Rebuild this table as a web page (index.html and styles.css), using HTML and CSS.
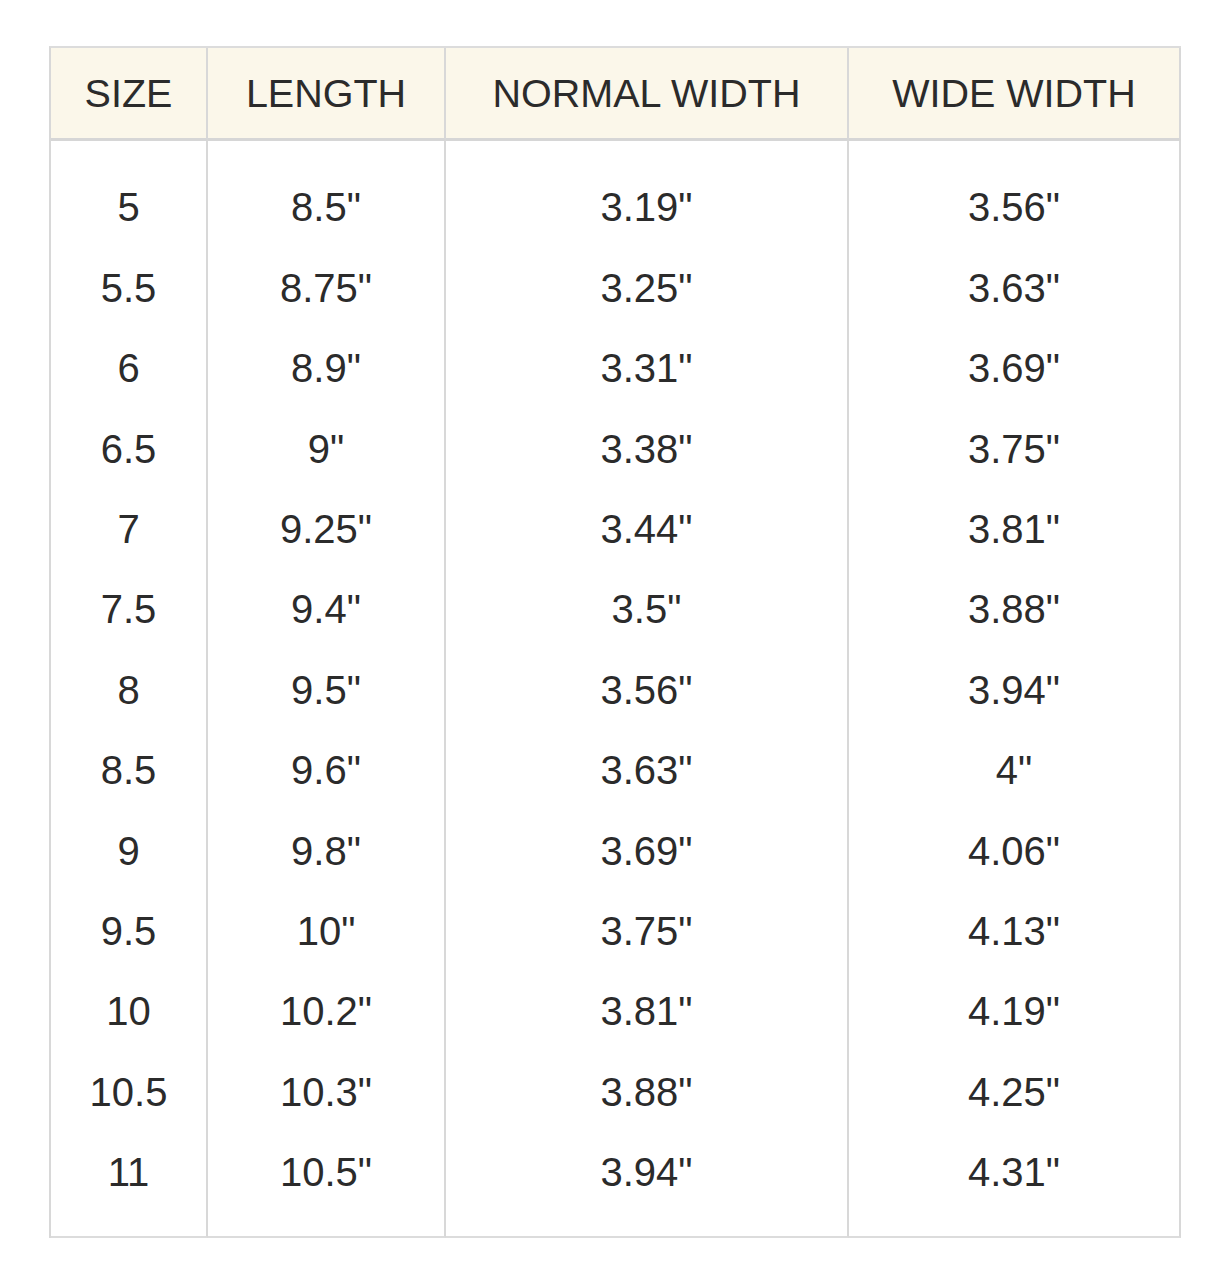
FILE: index.html
```html
<!DOCTYPE html>
<html lang="en">
<head>
<meta charset="utf-8">
<title>Size Chart</title>
<link rel="stylesheet" href="styles.css">
</head>
<body>
<table class="size-chart">
  <colgroup>
    <col class="c-size">
    <col class="c-length">
    <col class="c-normal">
    <col class="c-wide">
  </colgroup>
  <thead>
    <tr><th>SIZE</th><th>LENGTH</th><th>NORMAL WIDTH</th><th>WIDE WIDTH</th></tr>
  </thead>
  <tbody>
    <tr class="first"><td>5</td><td>8.5"</td><td>3.19"</td><td>3.56"</td></tr>
    <tr><td>5.5</td><td>8.75"</td><td>3.25"</td><td>3.63"</td></tr>
    <tr><td>6</td><td>8.9"</td><td>3.31"</td><td>3.69"</td></tr>
    <tr><td>6.5</td><td>9"</td><td>3.38"</td><td>3.75"</td></tr>
    <tr><td>7</td><td>9.25"</td><td>3.44"</td><td>3.81"</td></tr>
    <tr><td>7.5</td><td>9.4"</td><td>3.5"</td><td>3.88"</td></tr>
    <tr><td>8</td><td>9.5"</td><td>3.56"</td><td>3.94"</td></tr>
    <tr><td>8.5</td><td>9.6"</td><td>3.63"</td><td>4"</td></tr>
    <tr><td>9</td><td>9.8"</td><td>3.69"</td><td>4.06"</td></tr>
    <tr><td>9.5</td><td>10"</td><td>3.75"</td><td>4.13"</td></tr>
    <tr><td>10</td><td>10.2"</td><td>3.81"</td><td>4.19"</td></tr>
    <tr><td>10.5</td><td>10.3"</td><td>3.88"</td><td>4.25"</td></tr>
    <tr class="last"><td>11</td><td>10.5"</td><td>3.94"</td><td>4.31"</td></tr>
  </tbody>
</table>
</body>
</html>
```
FILE: styles.css
```css
html, body {
  margin: 0;
  padding: 0;
  background: #ffffff;
}

body {
  padding: 46px 0 0 49px;
  font-family: "Liberation Sans", Arial, Helvetica, sans-serif;
  color: #2b2b2b;
}

.size-chart {
  border-collapse: separate;
  border-spacing: 0;
  table-layout: fixed;
  width: 1132px;
  border-left: 2px solid #d8d8d8;
  border-top: 2px solid #dcdcdc;
}

.c-size { width: 157px; }
.c-length { width: 238px; }
.c-normal { width: 403px; }
.c-wide { width: 332px; }

.size-chart th,
.size-chart td {
  padding: 0;
  text-align: center;
  font-size: 39.5px;
  font-weight: normal;
  line-height: 45px;
  border-right: 2px solid #d8d8d8;
}

.size-chart th {
  background: #fbf7ea;
  height: 90px;
  border-bottom: 3px solid #d6d6d6;
  box-sizing: content-box;
}

.size-chart td {
  font-size: 40px;
  height: 80.4px;
  box-sizing: border-box;
  vertical-align: middle;
}

.size-chart tr.first td {
  height: 107.2px;
  padding-top: 26.8px;
}

.size-chart tr.last td {
  height: 105.2px;
  padding-bottom: 22.8px;
  border-bottom: 2px solid #dcdcdc;
}
```
